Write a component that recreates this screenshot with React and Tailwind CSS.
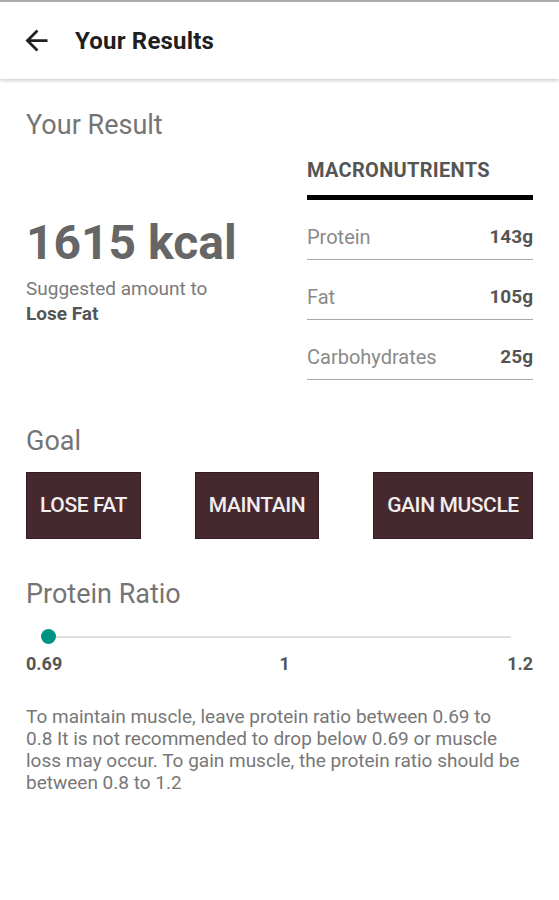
import React from "react";

function ArrowBack() {
  return (
    <svg width="33" height="33" viewBox="0 0 24 24" fill="#1f1f1f">
      <path d="M20 11H7.83l5.59-5.59L12 4l-8 8 8 8 1.41-1.41L7.83 13H20v-2z" />
    </svg>
  );
}

function MacroRow({ label, value }) {
  return (
    <div className="flex items-center justify-between pt-[25px] pb-[10px] border-b border-[#a8a8a8]">
      <span className="text-[20px] leading-[24px] text-[#8a8a8a]">{label}</span>
      <span className="text-[19px] leading-[24px] font-bold text-[#555555]">{value}</span>
    </div>
  );
}

function GoalButton({ children, w }) {
  return (
    <div
      className={`${w} h-[67px] flex items-center justify-center bg-[#46292f] border border-[#351a20] text-[21px] font-medium text-[#f2eeee] tracking-[-0.4px]`}
    >
      {children}
    </div>
  );
}

export default function App() {
  return (
    <div className="w-[559px] h-[900px] bg-white font-['Roboto',sans-serif] border-t-2 border-[#ababab] overflow-hidden">
      <header className="h-[77px] flex items-center pl-[20px] shadow-[0_2px_3px_rgba(0,0,0,0.18)] relative z-10">
        <ArrowBack />
        <h1 className="ml-[22px] text-[24px] font-bold text-[#1f1f1f] tracking-[0.2px]">Your Results</h1>
      </header>

      <main className="px-[26px]">
        <section className="flex justify-between items-start">
          <div className="pt-[31px]">
            <h2 className="text-[27px] leading-[30px] text-[#757575]">Your Result</h2>
            <div className="mt-[75px] text-[48px] leading-[56px] font-bold text-[#666666]">
              1615 kcal
            </div>
            <div className="mt-[5px] text-[19px] leading-[25px] text-[#7a7a7a]">Suggested amount to</div>
            <div className="text-[19px] leading-[25px] font-bold text-[#555555]">Lose Fat</div>
          </div>

          <div className="w-[226px] pt-[80px]">
            <div className="text-[20px] leading-[22px] font-bold text-[#555555] tracking-[0.3px]">MACRONUTRIENTS</div>
            <div className="mt-[14px] h-[5px] bg-black" />
            <MacroRow label="Protein" value="143g" />
            <MacroRow label="Fat" value="105g" />
            <MacroRow label="Carbohydrates" value="25g" />
          </div>
        </section>

        <h2 className="mt-[46px] text-[27px] leading-[30px] text-[#757575]">Goal</h2>
        <div className="mt-[16px] flex justify-between">
          <GoalButton w="w-[115px]">LOSE FAT</GoalButton>
          <GoalButton w="w-[124px]">MAINTAIN</GoalButton>
          <GoalButton w="w-[160px]">GAIN MUSCLE</GoalButton>
        </div>

        <h2 className="mt-[40px] text-[27px] leading-[30px] text-[#757575]">Protein Ratio</h2>
        <div className="mt-[18px] h-[20px] flex items-center pl-[23px] pr-[22px]">
          <div className="relative w-full h-[2px] bg-[#dedede]">
            <div className="absolute left-[-8px] top-[-7px] w-[15px] h-[15px] rounded-full bg-[#009485]" />
          </div>
        </div>
        <div className="mt-[7px] flex justify-between text-[18px] leading-[20px] font-bold text-[#555555]">
          <span>0.69</span>
          <span>1</span>
          <span>1.2</span>
        </div>

        <p className="mt-[32px] text-[19px] leading-[22px] text-[#777777] whitespace-nowrap">
          To maintain muscle, leave protein ratio between 0.69 to
          <br />
          0.8 It is not recommended to drop below 0.69 or muscle
          <br />
          loss may occur. To gain muscle, the protein ratio should be
          <br />
          between 0.8 to 1.2
        </p>
      </main>
    </div>
  );
}
